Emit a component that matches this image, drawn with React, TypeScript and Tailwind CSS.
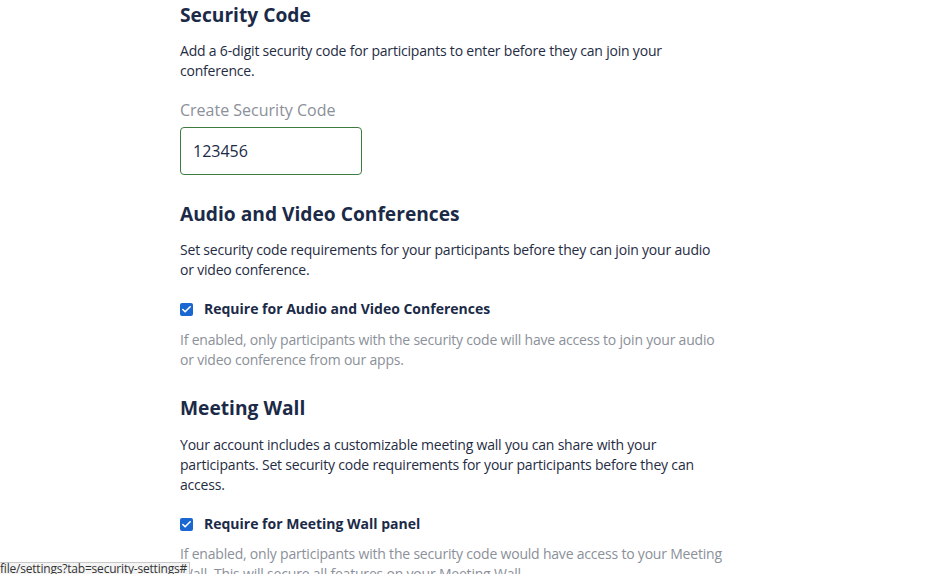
import { Check } from 'lucide-react';

// Kryssruta i samma stil som i inställningarna
function Checkbox({ label }: { label: string }) {
  return (
    <label className="flex items-center gap-[11px] h-5">
      <span className="w-[13px] h-[13px] rounded-[2px] bg-[#1a67d2] flex items-center justify-center">
        <Check className="w-[11px] h-[11px] text-white" strokeWidth={3.5} />
      </span>
      <span className="text-sm font-bold text-[#1b2a47]">{label}</span>
    </label>
  );
}

export default function App() {
  return (
    <div className="relative h-[574px] overflow-hidden bg-white font-['Open_Sans',sans-serif] text-[#1f2c44]">
      <div className="ml-[180px] w-[544px] pt-px">
        <section>
          <h2 className="text-[19.2px] leading-7 font-bold text-[#1b2a47]">Security Code</h2>
          <p className="mt-3 text-sm leading-5 tracking-[-0.2px]">
            Add a 6-digit security code for participants to enter before they can join your conference.
          </p>
          <div className="mt-[17px] text-base leading-6 text-[#8b9099]">Create Security Code</div>
          <input
            readOnly
            value="123456"
            className="mt-[5px] w-[182px] h-[48px] px-3 rounded border border-[#3e7b3e] text-base text-[#1b2a47] outline-none"
          />
        </section>

        <section className="mt-[25px]">
          <h2 className="text-[19.2px] leading-7 font-bold text-[#1b2a47]">Audio and Video Conferences</h2>
          <p className="mt-3 text-sm leading-5 tracking-[-0.2px]">
            Set security code requirements for your participants before they can join your audio or video conference.
          </p>
          <div className="mt-[19px]">
            <Checkbox label="Require for Audio and Video Conferences" />
          </div>
          <p className="mt-[11px] text-sm leading-5 tracking-[-0.2px] text-[#8b9099]">
            If enabled, only participants with the security code will have access to join your audio or video conference from our apps.
          </p>
        </section>

        <section className="mt-[24px]">
          <h2 className="text-[19.2px] leading-7 font-bold text-[#1b2a47]">Meeting Wall</h2>
          <p className="mt-[13px] text-sm leading-5 tracking-[-0.2px] pr-4">
            Your account includes a customizable meeting wall you can share with your participants. Set security code requirements for your participants before they can access.
          </p>
          <div className="mt-[19px]">
            <Checkbox label="Require for Meeting Wall panel" />
          </div>
          <p className="mt-[10px] text-sm leading-5 tracking-[-0.2px] text-[#8b9099]">
            If enabled, only participants with the security code would have access to your Meeting Wall. This will secure all features on your Meeting Wall.
          </p>
        </section>
      </div>

      {/* webbläsarens statusrad */}
      <div className="absolute left-0 bottom-0 w-[190px] h-[12px] bg-[#f4f4f4] border-t border-r border-[#c8c8c8] overflow-hidden">
        <span className="block -mt-[1px] text-[12px] leading-[14px] text-[#333] font-['Open_Sans',sans-serif] tracking-[-0.2px] whitespace-nowrap">
          file/settings?tab=security-settings#
        </span>
      </div>
    </div>
  );
}
